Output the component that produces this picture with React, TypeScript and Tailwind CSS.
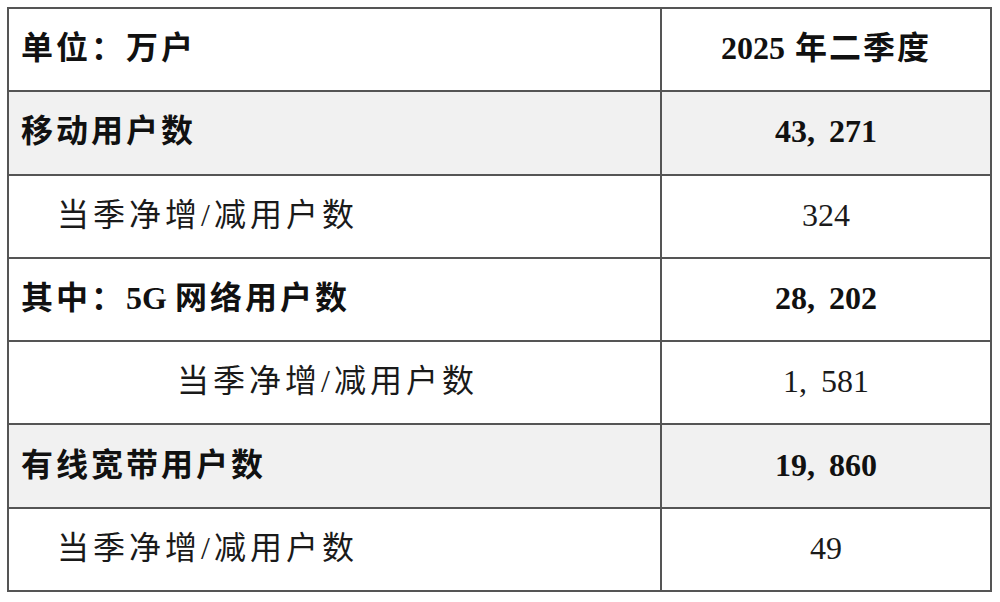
import React from 'react';

type Row = {
  label: React.ReactNode;
  value: string;
  bold?: boolean;
  shaded?: boolean;
  indent: string;
};

const rows: Row[] = [
  { label: '移动用户数', value: '43,271', bold: true, shaded: true, indent: 'pl-[12px]' },
  { label: '当季净增/减用户数', value: '324', indent: 'pl-[48px]' },
  {
    label: (
      <span>
        其中：<span className="tracking-normal mr-[8px]">5G</span>网络用户数
      </span>
    ),
    value: '28,202',
    bold: true,
    indent: 'pl-[12px]',
  },
  { label: '当季净增/减用户数', value: '1,581', indent: 'pl-[168px]' },
  { label: '有线宽带用户数', value: '19,860', bold: true, shaded: true, indent: 'pl-[12px]' },
  { label: '当季净增/减用户数', value: '49', indent: 'pl-[48px]' },
];

// comma gets the wide slot it has in the original document font
const Num: React.FC<{ value: string }> = ({ value }) => {
  const parts = value.split(',');
  return (
    <span className="tracking-normal">
      {parts.map((p, i) => (
        <React.Fragment key={i}>
          {i > 0 && <span className="mr-[14px]">,</span>}
          {p}
        </React.Fragment>
      ))}
    </span>
  );
};

export default function App() {
  return (
    <div className="w-[1000px] h-[602px] bg-white pt-[7px] pl-[7px] font-['Liberation_Serif','Noto_Sans_CJK_SC',serif] text-[32px] text-[#111]">
      <div className="w-[985px] border-2 border-[#555]">
        {/* header */}
        <div className="grid grid-cols-[653px_1fr] h-[83.3px] border-b-2 border-[#555]">
          <div className="flex items-center pb-[3px] pl-[12px] border-r-2 border-[#555] font-bold tracking-[3px]">
            单位：万户
          </div>
          <div className="flex items-center justify-center pb-[3px] font-bold tracking-[2px]">
            <span>
              <span className="tracking-normal mr-[10px]">2025</span>年二季度
            </span>
          </div>
        </div>

        {rows.map((r, i) => {
          const last = i === rows.length - 1;
          return (
            <div
              key={i}
              className={`grid grid-cols-[653px_1fr] ${last ? 'h-[81.3px]' : 'h-[83.3px] border-b-2 border-[#555]'} ${r.shaded ? 'bg-[#f1f1f1]' : 'bg-white'}`}
            >
              <div
                className={`flex items-center pb-[3px] border-r-2 border-[#555] ${r.indent} ${r.bold ? 'font-bold tracking-[3px]' : 'font-normal tracking-[4px] text-[#1a1a1a]'}`}
              >
                {r.label}
              </div>
              <div className={`flex items-center justify-center pb-[3px] ${r.bold ? 'font-bold' : 'font-normal text-[#1a1a1a]'}`}>
                <Num value={r.value} />
              </div>
            </div>
          );
        })}
      </div>
    </div>
  );
}
